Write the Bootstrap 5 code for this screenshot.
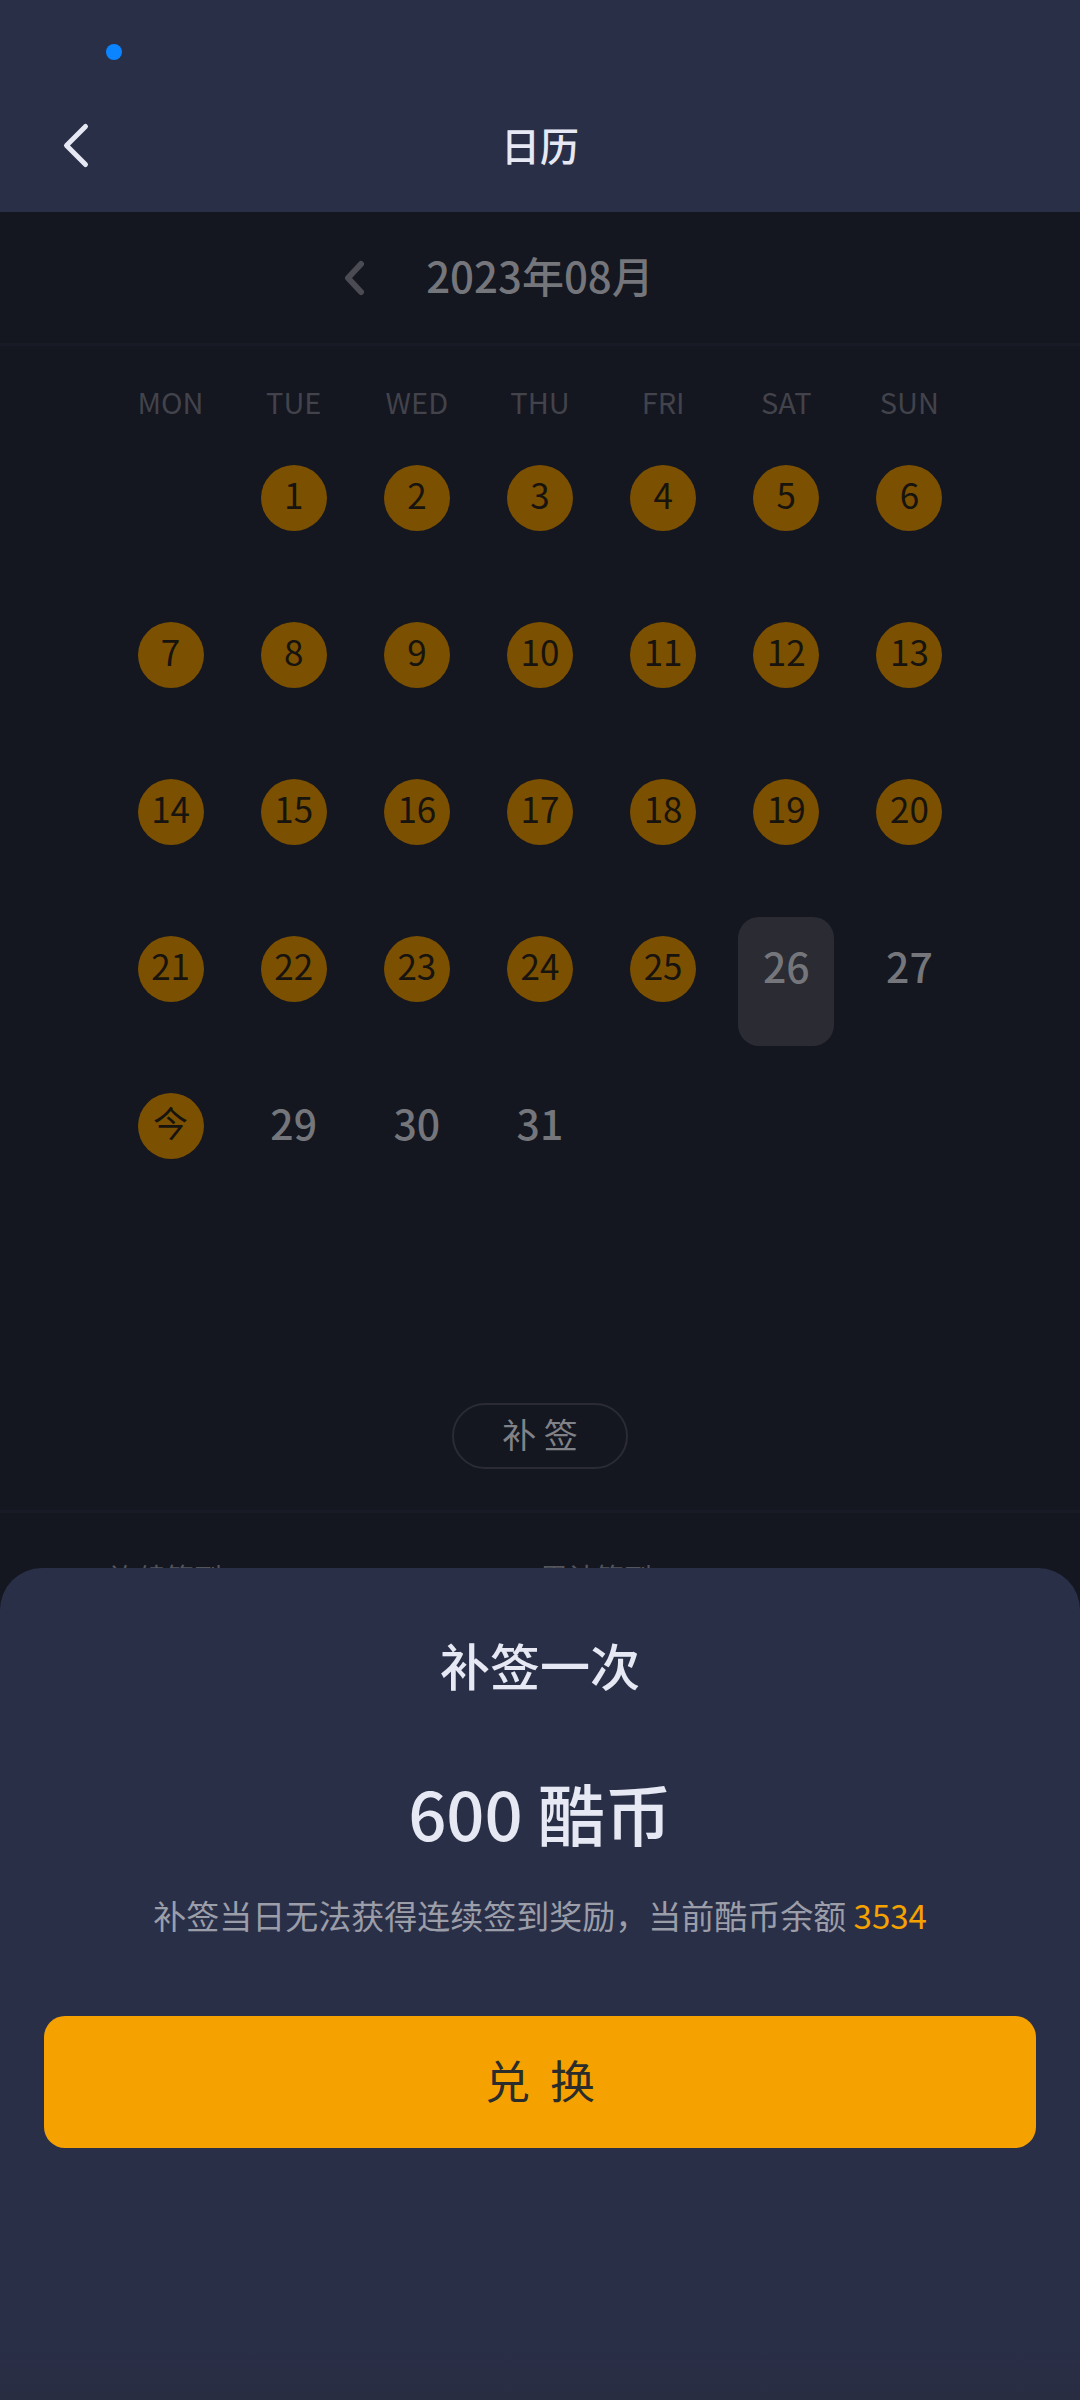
<!DOCTYPE html>
<html lang="zh-CN">
<head>
<meta charset="utf-8">
<meta name="viewport" content="width=device-width, initial-scale=1">
<title>日历</title>
<link href="https://cdn.jsdelivr.net/npm/bootstrap@5.3.0/dist/css/bootstrap.min.css" rel="stylesheet">
<style>
  body { background: #141620; color: #75767b; font-family: "Noto Sans CJK SC", sans-serif; min-height: 100vh; }
  .topbar { background: #2a2f48; color: #e6e9f3; padding-top: 84px; }
  .topbar-inner { height: 128px; padding: 0 44px; }
  .topbar h1 { font-size: 39px; line-height: 44px; padding-bottom: 8px; font-weight: 500; }
  .mic-dot { width: 16px; height: 16px; left: 106px; top: 44px; background: #0a84ff; }
  .plain-btn { background: none; border: 0; padding: 0; color: inherit; line-height: 0; }
  .side { width: 64px; }
  .month-bar { height: 134px; border-bottom: 3px solid #181a25; }
  .month-bar h2 { font-size: 42px; line-height: 50px; font-weight: 500; padding-bottom: 6px; }
  .month-side { width: 84px; color: #4b4c53; }
  .calendar { padding: 0 109px; }
  .calendar table { table-layout: fixed; }
  .calendar th { font-size: 29px; line-height: 34px; font-weight: 400; color: #42434b; padding: 38px 0 28px; text-align: center; }
  .calendar td { height: 157px; padding: 0; vertical-align: top; }
  .day { display: block; width: 96px; height: 129px; margin: 0 auto; padding: 18px 0 44px; border: 0; border-radius: 21px; background: none; color: #75767b; }
  .day span { display: block; width: 66px; margin: 0 auto; font-size: 41px; line-height: 58px; padding: 0 0 8px; font-weight: 500; }
  .day.signed span { background: #7b5000; color: #17130f; border-radius: 50%; font-size: 35px; font-weight: 400; }
  .day.picked { background: #2a2b33; }
  .resign { width: 176px; height: 66px; margin-top: 172px; border: 2px solid #2a2b35; border-radius: 33px; background: none; color: #818287; font-size: 34px; line-height: 40px; padding: 0 0 4px; }
  .totals { margin-top: 41px; padding: 46px 110px 0; border-top: 3px solid #181a25; font-size: 28px; line-height: 36px; color: #55565d; }
  .offcanvas.sheet { height: auto; border: 0; border-radius: 42px 42px 0 0; color: #e6e9f3; background: linear-gradient(#2a2f48 calc(100% - 56px), #282d42); padding: 66px 44px 252px; text-align: center; }
  .sheet h3 { font-size: 50px; line-height: 60px; font-weight: 500; margin: 0; }
  .price { font-size: 67px; line-height: 80px; font-weight: 500; margin: 78px 0 0; }
  .hint { font-size: 33px; line-height: 44px; color: #9b9ea9; margin: 41px 0 0; }
  .hint b { font-weight: 400; color: #f5a200; }
  .redeem, .redeem:hover { height: 132px; margin-top: 79px; border: 0; border-radius: 21px; background: #f5a200; color: #2b2c2c; font-size: 45px; font-weight: 400; padding: 0 0 4px; }
</style>
<script src="https://cdn.jsdelivr.net/npm/bootstrap@5.3.0/dist/js/bootstrap.bundle.min.js"></script>
</head>
<body>
<header class="topbar position-relative">
  <span class="mic-dot position-absolute rounded-circle"></span>
  <div class="topbar-inner d-flex align-items-center justify-content-between">
    <div class="side d-flex">
      <button class="plain-btn" type="button" aria-label="返回">
        <svg width="64" height="64" viewBox="0 0 64 64" fill="none" stroke="currentColor" stroke-width="5" stroke-linecap="round" stroke-linejoin="round"><path d="M41.500 10.500 22.500 29.500 41.500 48.500"/></svg>
      </button>
    </div>
    <h1 class="m-0">日历</h1>
    <div class="side"></div>
  </div>
</header>

<main>
  <div class="month-bar d-flex align-items-center justify-content-center">
    <div class="month-side">
      <button class="plain-btn" type="button" aria-label="上个月">
        <svg width="24" height="40" viewBox="0 0 24 40" fill="none" stroke="currentColor" stroke-width="6" stroke-linecap="round" stroke-linejoin="round"><path d="M19 6 6 20 19 34"/></svg>
      </button>
    </div>
    <h2 class="m-0">2023年08月</h2>
    <div class="month-side"></div>
  </div>

  <div class="calendar">
    <table class="w-100">
      <thead><tr><th>MON</th><th>TUE</th><th>WED</th><th>THU</th><th>FRI</th><th>SAT</th><th>SUN</th></tr></thead>
      <tbody>
        <tr>
          <td></td>
          <td><button class="day signed"><span>1</span></button></td>
          <td><button class="day signed"><span>2</span></button></td>
          <td><button class="day signed"><span>3</span></button></td>
          <td><button class="day signed"><span>4</span></button></td>
          <td><button class="day signed"><span>5</span></button></td>
          <td><button class="day signed"><span>6</span></button></td>
        </tr>
        <tr>
          <td><button class="day signed"><span>7</span></button></td>
          <td><button class="day signed"><span>8</span></button></td>
          <td><button class="day signed"><span>9</span></button></td>
          <td><button class="day signed"><span>10</span></button></td>
          <td><button class="day signed"><span>11</span></button></td>
          <td><button class="day signed"><span>12</span></button></td>
          <td><button class="day signed"><span>13</span></button></td>
        </tr>
        <tr>
          <td><button class="day signed"><span>14</span></button></td>
          <td><button class="day signed"><span>15</span></button></td>
          <td><button class="day signed"><span>16</span></button></td>
          <td><button class="day signed"><span>17</span></button></td>
          <td><button class="day signed"><span>18</span></button></td>
          <td><button class="day signed"><span>19</span></button></td>
          <td><button class="day signed"><span>20</span></button></td>
        </tr>
        <tr>
          <td><button class="day signed"><span>21</span></button></td>
          <td><button class="day signed"><span>22</span></button></td>
          <td><button class="day signed"><span>23</span></button></td>
          <td><button class="day signed"><span>24</span></button></td>
          <td><button class="day signed"><span>25</span></button></td>
          <td><button class="day picked"><span>26</span></button></td>
          <td><button class="day"><span>27</span></button></td>
        </tr>
        <tr>
          <td><button class="day signed"><span>今</span></button></td>
          <td><button class="day"><span>29</span></button></td>
          <td><button class="day"><span>30</span></button></td>
          <td><button class="day"><span>31</span></button></td>
          <td></td><td></td><td></td>
        </tr>
      </tbody>
    </table>
  </div>

  <div class="d-flex justify-content-center">
    <button class="resign" type="button">补 签</button>
  </div>

  <div class="totals">
    <div class="row g-0">
      <div class="col-6">连续签到</div>
      <div class="col-6">累计签到</div>
    </div>
  </div>
</main>

<section class="offcanvas offcanvas-bottom show sheet" data-bs-backdrop="false" data-bs-scroll="true" aria-labelledby="sheetTitle">
  <h3 id="sheetTitle">补签一次</h3>
  <p class="price">600 酷币</p>
  <p class="hint">补签当日无法获得连续签到奖励，当前酷币余额 <b>3534</b></p>
  <button class="redeem btn w-100" type="button">兑&nbsp;&nbsp;换</button>
</section>
</body>
</html>
